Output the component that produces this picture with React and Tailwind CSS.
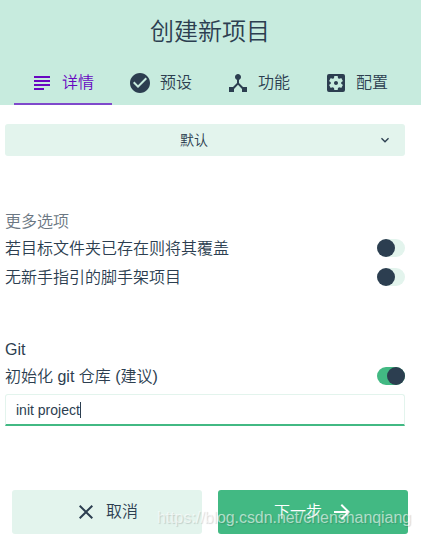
import { useState } from "react";
import {
  MdArrowForward,
  MdCheckCircle,
  MdClose,
  MdDeviceHub,
  MdKeyboardArrowDown,
  MdSettingsApplications,
  MdSubject,
} from "react-icons/md";

const tabs = [
  { id: "details", label: "详情", Icon: MdSubject },
  { id: "presets", label: "预设", Icon: MdCheckCircle },
  { id: "features", label: "功能", Icon: MdDeviceHub },
  { id: "config", label: "配置", Icon: MdSettingsApplications },
];

const Switch = ({ label, checked, onChange }) => (
  <button
    type="button"
    role="switch"
    aria-checked={checked}
    className="flex w-full items-center justify-between text-left text-base leading-[29px]"
    onClick={() => onChange(!checked)}
  >
    <span>{label}</span>
    <span
      className={`mb-0.5 flex h-[18px] w-7 rounded-full ${
        checked ? "justify-end bg-[#42b983]" : "justify-start bg-[#e3f4ed]"
      }`}
    >
      <span className="size-[18px] rounded-full bg-[#2c3e50]" />
    </span>
  </button>
);

const App = () => {
  const [activeTab, setActiveTab] = useState("details");
  const [force, setForce] = useState(false);
  const [bare, setBare] = useState(false);
  const [git, setGit] = useState(true);

  return (
    <div className="relative flex h-[536px] w-[421px] flex-col overflow-hidden bg-white font-['Liberation_Sans','Noto_Sans_CJK_SC',sans-serif] font-[350] text-[#2c3e50]">
      <header className="h-[105px] shrink-0 bg-[#c7ebde]">
        <h1 className="h-[61px] pr-px text-center text-2xl leading-[63px] font-[350]">
          创建新项目
        </h1>
        <nav className="flex pl-3.5">
          {tabs.map(({ id, label, Icon }) => (
            <button
              key={id}
              type="button"
              className={`flex h-11 w-[98px] items-center gap-2 border-b-2 pt-0.5 pl-4 text-base ${
                activeTab === id
                  ? "border-[#7f49cb] text-[#6806c1]"
                  : "border-transparent"
              }`}
              onClick={() => setActiveTab(id)}
            >
              <Icon className="size-6" />
              <span>{label}</span>
            </button>
          ))}
        </nav>
      </header>

      <main className="flex w-[405px] grow flex-col pt-[19px] pl-[5px]">
        <button
          type="button"
          className="flex h-8 shrink-0 items-center rounded-[3px] bg-[#e3f4ed] pr-3 text-sm"
        >
          <span className="grow pl-1.5 text-center">默认</span>
          <MdKeyboardArrowDown className="size-4" />
        </button>

        <section className="mt-[52px]">
          <div className="h-[26px] text-base leading-7 text-[#6b7783]">
            更多选项
          </div>
          <Switch
            label="若目标文件夹已存在则将其覆盖"
            checked={force}
            onChange={setForce}
          />
          <Switch
            label="无新手指引的脚手架项目"
            checked={bare}
            onChange={setBare}
          />
        </section>

        <section className="mt-11">
          <div className="h-[26px] text-base leading-7">Git</div>
          <Switch
            label="初始化 git 仓库 (建议)"
            checked={git}
            onChange={setGit}
          />
          <div className="mt-[3px] flex h-8 items-center rounded-t-[3px] border border-b-2 border-[#e3f4ed] border-b-[#42b983] pl-2.5 text-sm">
            <span>init project</span>
            <span className="h-4 w-px bg-[#2c3e50]" />
          </div>
        </section>
      </main>

      <footer className="flex h-[46px] shrink-0 gap-4 pl-3 text-base">
        <button
          type="button"
          className="flex h-11 w-[190px] items-center justify-center gap-2 rounded-[3px] bg-[#e3f4ed] pr-0.5"
        >
          <MdClose className="size-6" />
          <span>取消</span>
        </button>
        <button
          type="button"
          className="flex h-11 w-[190px] items-center justify-center gap-2 rounded-[3px] bg-[#42b983] pl-0.5 text-white"
        >
          <span>下一步</span>
          <MdArrowForward className="size-6" />
        </button>
      </footer>

      <div className="pointer-events-none absolute top-[506px] left-[157px] text-base leading-6 tracking-[-0.06px] whitespace-nowrap text-white/60 [text-shadow:1px_1px_1px_rgb(0_0_0/0.15)]">
        https://blog.csdn.net/chenshanqiang
      </div>
    </div>
  );
};

export default App;
